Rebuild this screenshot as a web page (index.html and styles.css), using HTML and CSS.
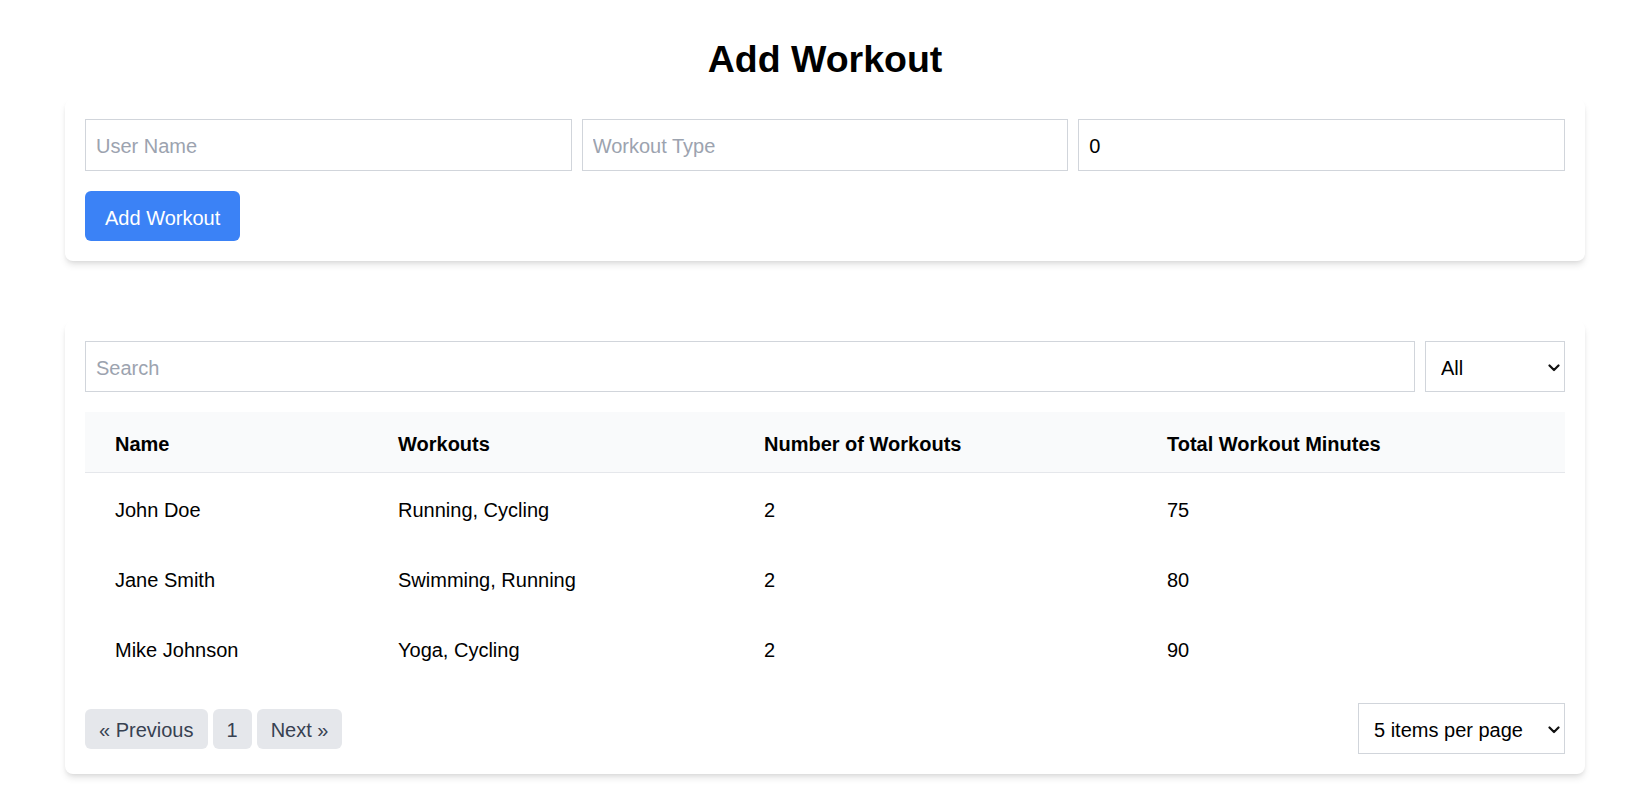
FILE: index.html
```html
<!DOCTYPE html>
<html lang="en">
<head>
<meta charset="utf-8">
<title>Add Workout</title>
<link rel="stylesheet" href="styles.css">
</head>
<body>
<main class="page">
  <h1 class="title">Add Workout</h1>

  <section class="card form-card">
    <div class="input-row">
      <input class="field" type="text" placeholder="User Name">
      <input class="field" type="text" placeholder="Workout Type">
      <input class="field" type="number" value="0">
    </div>
    <div class="actions">
      <button class="btn-primary" type="button">Add Workout</button>
    </div>
  </section>

  <section class="card list-card">
    <div class="filter-row">
      <input class="field search" type="text" placeholder="Search">
      <div class="select-wrap filter-select">
        <select class="select">
          <option>All</option>
        </select>
        <svg class="chevron" width="12" height="8" viewBox="0 0 12 8" aria-hidden="true"><path d="M1.5 1.5 L6 6 L10.5 1.5" fill="none" stroke="#111" stroke-width="2.2" stroke-linecap="round" stroke-linejoin="round"/></svg>
      </div>
    </div>

    <table class="table">
      <colgroup>
        <col class="c1"><col class="c2"><col class="c3"><col class="c4">
      </colgroup>
      <thead>
        <tr>
          <th>Name</th>
          <th>Workouts</th>
          <th>Number of Workouts</th>
          <th>Total Workout Minutes</th>
        </tr>
      </thead>
      <tbody>
        <tr><td>John Doe</td><td>Running, Cycling</td><td>2</td><td>75</td></tr>
        <tr><td>Jane Smith</td><td>Swimming, Running</td><td>2</td><td>80</td></tr>
        <tr><td>Mike Johnson</td><td>Yoga, Cycling</td><td>2</td><td>90</td></tr>
      </tbody>
    </table>

    <div class="pager-row">
      <div class="pager">
        <button class="page-btn" type="button">&laquo; Previous</button>
        <button class="page-btn" type="button">1</button>
        <button class="page-btn" type="button">Next &raquo;</button>
      </div>
      <div class="select-wrap per-page">
        <select class="select">
          <option>5 items per page</option>
        </select>
        <svg class="chevron" width="12" height="8" viewBox="0 0 12 8" aria-hidden="true"><path d="M1.5 1.5 L6 6 L10.5 1.5" fill="none" stroke="#111" stroke-width="2.2" stroke-linecap="round" stroke-linejoin="round"/></svg>
      </div>
    </div>
  </section>
</main>
</body>
</html>
```

FILE: styles.css
```css
* { box-sizing: border-box; }

html, body {
  margin: 0;
  padding: 0;
  background: #ffffff;
}

body {
  font-family: "Segoe UI", "Liberation Sans", Arial, sans-serif;
  font-size: 20px;
  line-height: 30px;
  color: #000;
}

.page {
  width: 1520px;
  margin-left: 65px;
  padding-top: 37px;
  padding-bottom: 10px;
}

.title {
  margin: 0 0 17px 0;
  font-size: 37.5px;
  line-height: 45px;
  font-weight: 700;
  text-align: center;
  color: #000;
}

.card {
  background: #fff;
  border-radius: 8px;
  padding: 20px;
  box-shadow: 0 5px 7.5px -1.25px rgba(0,0,0,0.1), 0 2.5px 5px -2.5px rgba(0,0,0,0.1);
}

.input-row {
  display: flex;
  gap: 10px;
}

.field {
  flex: 1 1 0;
  min-width: 0;
  height: 51px;
  padding: 3px 10px 0;
  border: 1px solid #d1d5db;
  border-radius: 0;
  font-family: inherit;
  font-size: 20px;
  color: #000;
  background: #fff;
  outline: none;
}

.input-row .field { height: 52px; }

.field::placeholder { color: #9ca3af; }

.field[type="number"]::-webkit-inner-spin-button,
.field[type="number"]::-webkit-outer-spin-button {
  -webkit-appearance: none;
  margin: 0;
}

.actions {
  margin-top: 20px;
  display: flex;
}

.btn-primary {
  height: 50px;
  padding: 3px 20px 0;
  border: 0;
  border-radius: 6px;
  background: #3b82f6;
  color: #fff;
  font-family: inherit;
  font-size: 20px;
  line-height: 30px;
}

.list-card {
  margin-top: 60px;
}

.filter-row {
  display: flex;
  gap: 10px;
}

.search { flex: 1 1 auto; }

.select-wrap {
  position: relative;
  display: flex;
}

.filter-select { width: 140px; }
.per-page { width: 207px; }

.select {
  -webkit-appearance: none;
  appearance: none;
  width: 100%;
  height: 51px;
  padding: 3px 30px 0 15px;
  border: 1px solid #d1d5db;
  border-radius: 0;
  background: #fff;
  font-family: inherit;
  font-size: 20px;
  color: #000;
  outline: none;
}

.chevron {
  position: absolute;
  right: 5px;
  top: 50%;
  margin-top: -3px;
  pointer-events: none;
}

.table {
  width: 100%;
  margin-top: 20px;
  border-collapse: collapse;
  table-layout: fixed;
}

.c1 { width: 283px; }
.c2 { width: 366px; }
.c3 { width: 403px; }
.c4 { width: 428px; }

.table thead tr {
  background: #f9fafb;
  border-bottom: 1px solid #e5e7eb;
}

.table th {
  text-align: left;
  font-weight: 700;
  padding: 17px 30px 13px;
  line-height: 30px;
  height: 60px;
}

.table td {
  padding: 22px 30px 18px;
  line-height: 30px;
  height: 70px;
}

.pager-row {
  margin-top: 20px;
  display: flex;
  align-items: center;
  justify-content: space-between;
}

.pager {
  display: flex;
  gap: 5px;
}

.page-btn {
  height: 40px;
  padding: 3px 14px 0;
  border: 0;
  border-radius: 6px;
  background: #e5e7eb;
  color: #374151;
  font-family: inherit;
  font-size: 20px;
  line-height: 30px;
}
```
